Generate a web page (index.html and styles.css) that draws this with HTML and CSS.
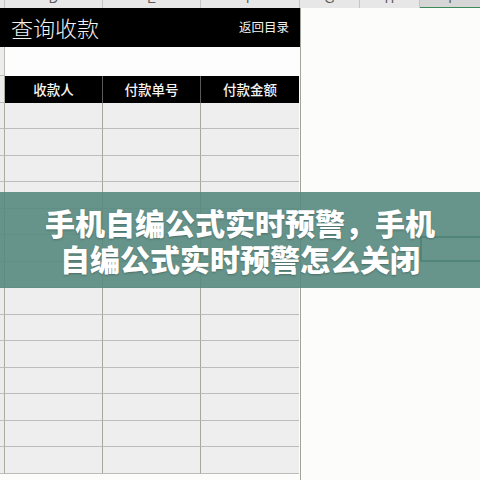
FILE: index.html
```html
<!DOCTYPE html>
<html lang="zh">
<head>
<meta charset="utf-8">
<link rel="stylesheet" href="styles.css">
</head>
<body>
<div class="page">
  <div class="colbar">
    <div class="ch"></div>
    <div class="ch"><span>D</span></div>
    <div class="ch"><span>E</span></div>
    <div class="ch"><span>F</span></div>
    <div class="ch"><span>G</span></div>
    <div class="ch"><span>H</span></div>
    <div class="ch ch-sel"><span>I</span></div>
  </div>
  <div class="sheet">
    <div class="left">
      <div class="titlebar">
        <span class="title">查询收款</span>
        <span class="back">返回目录</span>
      </div>
      <div class="blank"><div class="rh"></div><div class="blank-cell"></div></div>
      <div class="grid">
        <div class="rh"></div><div class="hd">收款人</div><div class="hd">付款单号</div><div class="hd">付款金额</div>
        <div class="rh"></div><div class="c"></div><div class="c"></div><div class="c"></div>
        <div class="rh"></div><div class="c"></div><div class="c"></div><div class="c"></div>
        <div class="rh"></div><div class="c"></div><div class="c"></div><div class="c"></div>
        <div class="rh"></div><div class="c"></div><div class="c"></div><div class="c"></div>
        <div class="rh"></div><div class="c"></div><div class="c"></div><div class="c"></div>
        <div class="rh"></div><div class="c"></div><div class="c"></div><div class="c"></div>
        <div class="rh"></div><div class="c"></div><div class="c"></div><div class="c"></div>
        <div class="rh"></div><div class="c"></div><div class="c"></div><div class="c"></div>
        <div class="rh"></div><div class="c"></div><div class="c"></div><div class="c"></div>
        <div class="rh"></div><div class="c"></div><div class="c"></div><div class="c"></div>
        <div class="rh"></div><div class="c"></div><div class="c"></div><div class="c"></div>
        <div class="rh"></div><div class="c"></div><div class="c"></div><div class="c"></div>
        <div class="rh"></div><div class="c"></div><div class="c"></div><div class="c"></div>
        <div class="rh"></div><div class="c"></div><div class="c"></div><div class="c"></div>
      </div>
    </div>
    <div class="right">
      <div class="selection"></div>
    </div>
  </div>
  <div class="banner">
    <h1 class="banner-text">手机自编公式实时预警，手机自编公式实时预警怎么关闭</h1>
  </div>
</div>
</body>
</html>
```
FILE: styles.css
```css
html, body {
  margin: 0;
  padding: 0;
}
body {
  font-family: "Noto Sans CJK SC", "Noto Sans", sans-serif;
  background: #fcfcfb;
}
.page {
  position: relative;
  width: 480px;
  height: 480px;
  overflow: hidden;
  background: #fcfcfb;
}
.colbar {
  display: grid;
  grid-template-columns: 5px 98px 98px 99px 60px 60px 60px;
  height: 8px;
  background: #e7e7e7;
}
.ch {
  position: relative;
  overflow: hidden;
  border-right: 1px solid #c4c4c4;
  text-align: center;
  color: #5a5a5a;
  font-family: "Liberation Sans", sans-serif;
  font-size: 13px;
}
.ch span {
  display: block;
  line-height: 14px;
  margin-top: -8px;
}
.ch-sel {
  background: #d6d6d6;
  border-bottom: 1px solid #3c8a5a;
  border-right: none;
}
.sheet {
  display: flex;
  height: 472px;
}
.left {
  width: 300px;
  display: flex;
  flex-direction: column;
  border-right: 1px solid #9fa59c;
}
.titlebar {
  height: 39px;
  background: #000;
  display: flex;
  align-items: center;
  justify-content: space-between;
  padding: 0 11px 0 11px;
  color: #f2f2f2;
}
.title {
  font-size: 22px;
  font-weight: 300;
  letter-spacing: 0;
  margin-top: -1px;
}
.back {
  font-size: 12.5px;
  margin-top: -2px;
}
.blank {
  height: 29px;
  display: flex;
}
.blank .rh {
  width: 5px;
  background: #ededed;
  border-right: 1px solid #b8bcb4;
  box-sizing: border-box;
}
.blank-cell {
  flex: 1;
  background: #fdfdfd;
}
.grid {
  display: grid;
  grid-template-columns: 5px 98px 98px 98px;
  grid-auto-rows: 26.5px;
}
.rh {
  background: #ececec;
  border-right: 1px solid #a9ad9f;
  border-bottom: 1px solid #bdbdbd;
  box-sizing: border-box;
}
.hd {
  background: #000;
  color: #f4f4f4;
  font-size: 13.5px;
  font-weight: 500;
  display: flex;
  align-items: center;
  justify-content: center;
  border-right: 1px solid #5a5a5a;
  box-sizing: border-box;
}
.hd:nth-child(4) {
  border-right: none;
}
.c {
  background: #eeeeee;
  border-right: 1px solid #a4a89c;
  border-bottom: 1px solid #bcbcbc;
  box-sizing: border-box;
}
.c:nth-child(4n) {
  border-right: none;
}
.right {
  position: relative;
  flex: 1;
  background: #fcfcfb;
}
.selection {
  position: absolute;
  left: 119px;
  top: 228px;
  width: 62px;
  height: 26px;
  border: 2px solid #22693e;
  box-sizing: border-box;
}
.banner {
  position: absolute;
  left: 0;
  top: 192px;
  width: 480px;
  height: 96px;
  background: rgba(86, 136, 126, 0.9);
  display: flex;
  align-items: center;
  justify-content: center;
}
.banner-text {
  margin: 0;
  width: 400px;
  text-align: center;
  color: #fff;
  font-size: 30px;
  font-weight: 900;
  line-height: 36px;
  text-shadow: 0 1px 2px rgba(0, 0, 0, 0.25);
}
```
